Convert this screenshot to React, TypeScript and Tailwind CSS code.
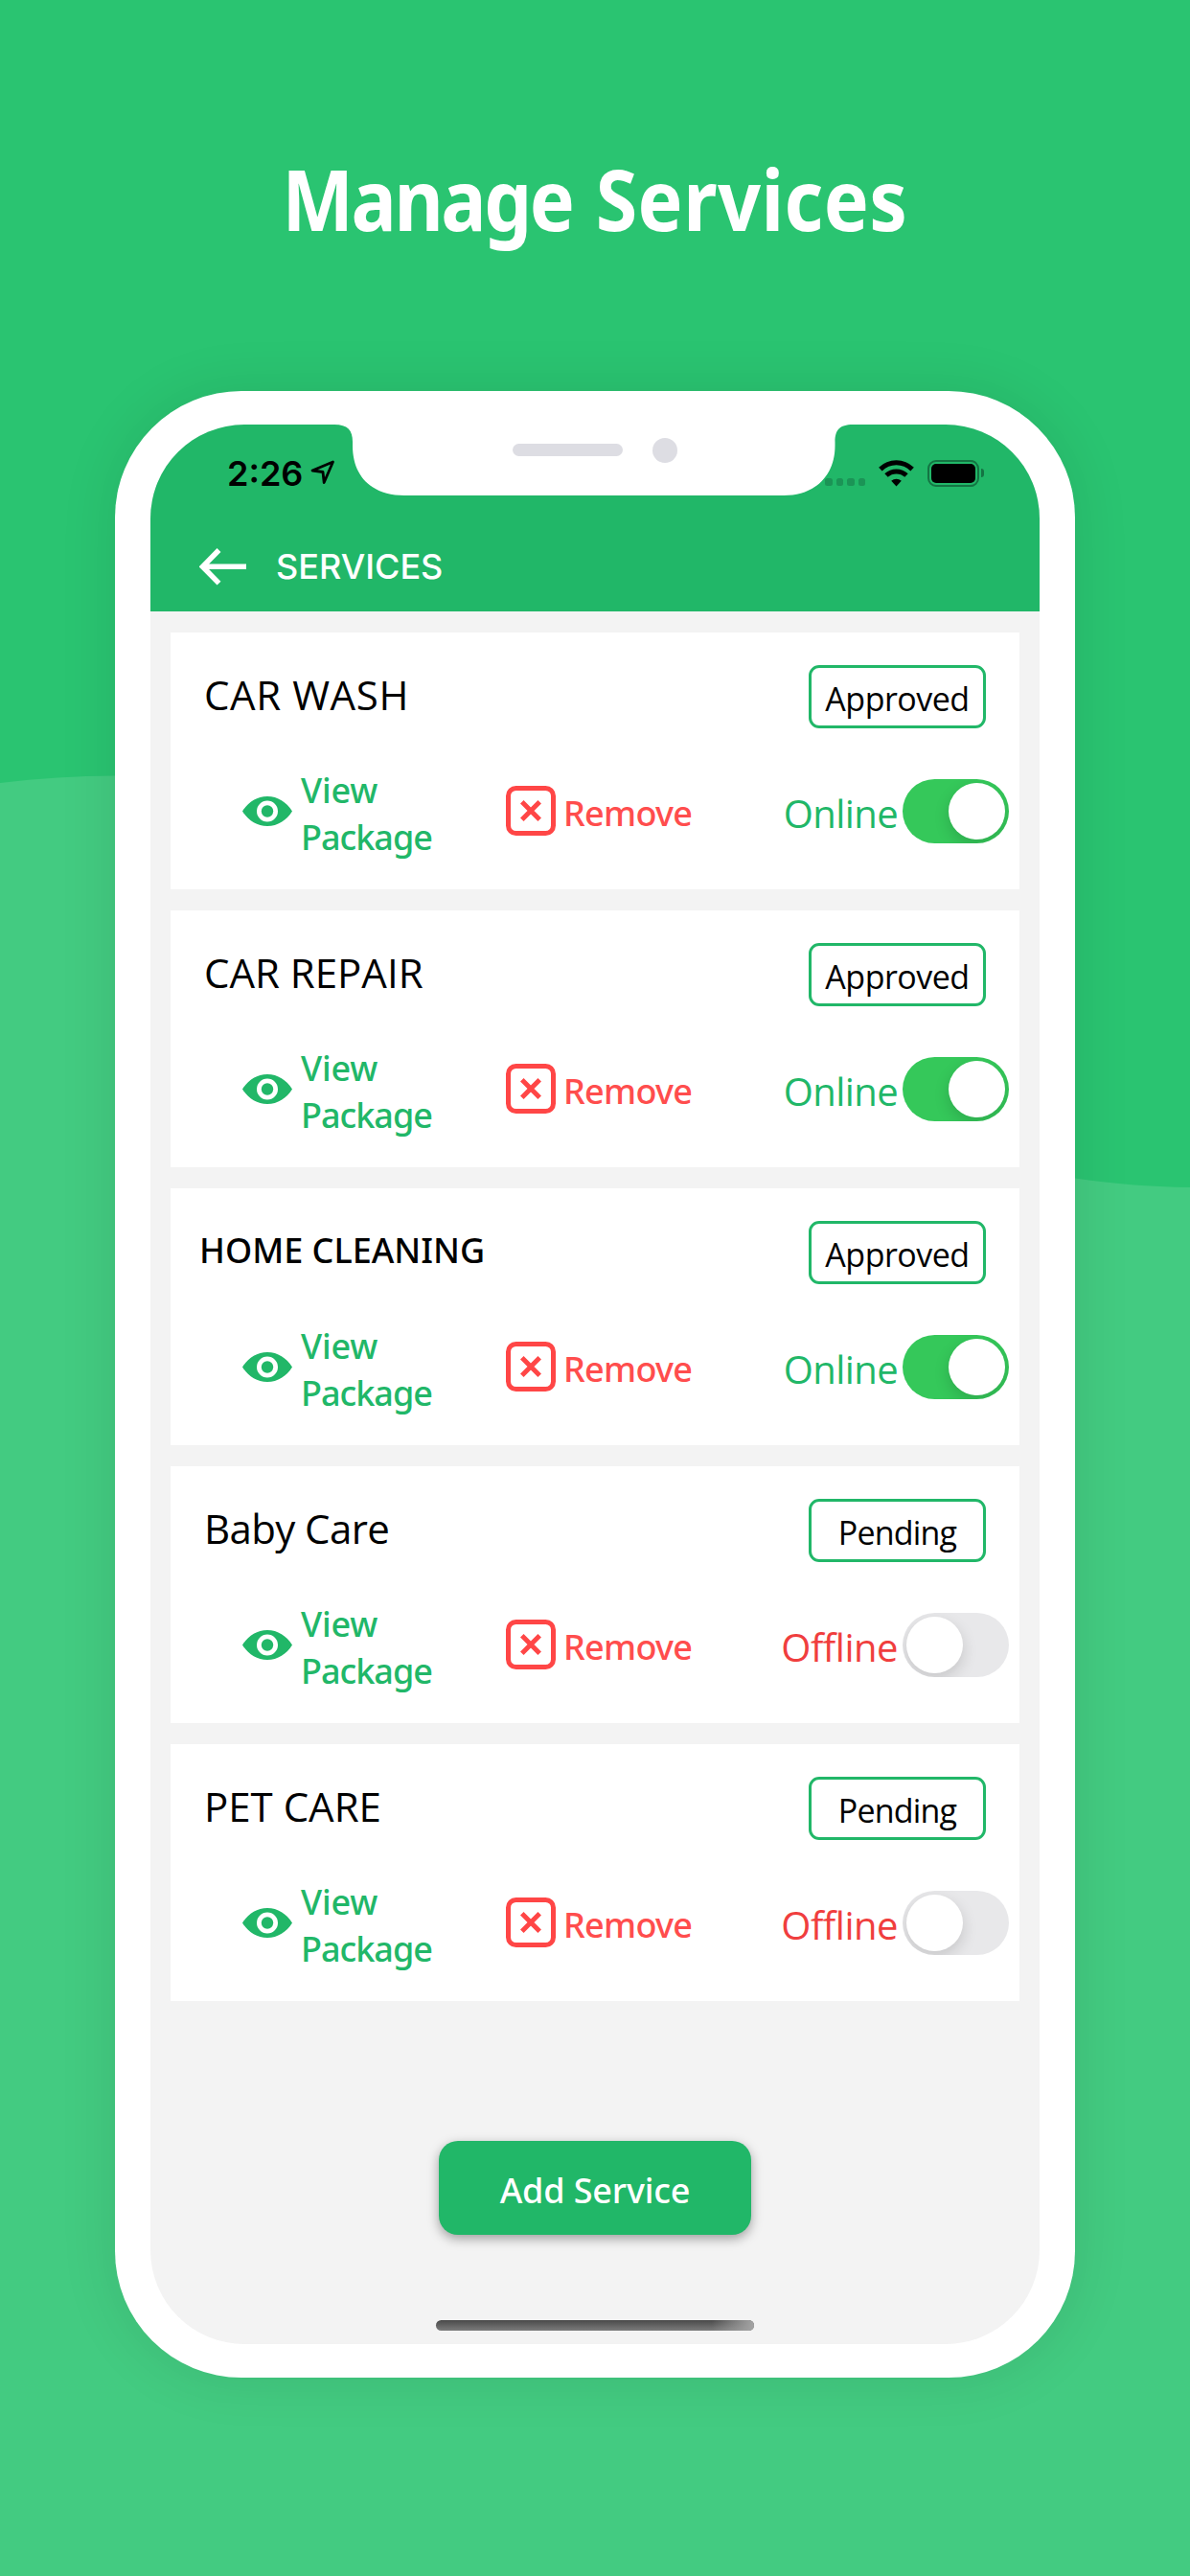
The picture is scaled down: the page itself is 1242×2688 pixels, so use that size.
import type { ReactNode } from "react";

type Service = {
  name: string;
  nameClass: string;
  status: "Approved" | "Pending";
  online: boolean;
};

const regularName = "ml-[35px] mt-[10px] text-[42px] font-['Open_Sans',sans-serif]";

const services: Service[] = [
  { name: "CAR WASH", nameClass: `${regularName} tracking-[0.6px]`, status: "Approved", online: true },
  { name: "CAR REPAIR", nameClass: `${regularName} tracking-normal`, status: "Approved", online: true },
  {
    name: "HOME CLEANING",
    nameClass: "ml-[30px] mt-[10px] text-[36px] font-medium",
    status: "Approved",
    online: true,
  },
  { name: "Baby Care", nameClass: `${regularName} tracking-[-0.6px]`, status: "Pending", online: false },
  { name: "PET CARE", nameClass: `${regularName} tracking-normal`, status: "Pending", online: false },
];

function Wave() {
  return (
    <svg className="absolute inset-0 h-full w-full" viewBox="0 0 1242 2688" fill="none" aria-hidden>
      <path
        d="M0 817C40 812 80 809.5 120 809.5C500 809.5 740 1180 1122 1229.5C1160 1235 1200 1238.500 1242 1239V2688H0Z"
        fill="#43cb81"
      />
    </svg>
  );
}

function Notch() {
  return (
    <div className="absolute left-0 top-[-2px] h-[76px] w-full">
      <svg className="absolute inset-0" width="928" height="76" viewBox="0 -2 928 76" aria-hidden>
        <path
          d="M192 -2V0C206 0 211 6 211 18V22C211 55 232 74 265 74H661C694 74 714.500 53 714.500 22V18C714.500 6 719 0 733 0V-2Z"
          fill="#fff"
        />
      </svg>
      <div className="relative flex h-[57px] items-center pl-[378px]">
        <span className="h-[13px] w-[115px] rounded-full bg-[#dddde3]" />
        <span className="ml-[31px] h-[26px] w-[26px] rounded-full bg-[#dddde3]" />
      </div>
    </div>
  );
}

function StatusBar() {
  return (
    <div className="flex h-[101px] items-center pl-[80px] pr-[58px] font-['Inter',sans-serif]">
      <span className="w-[79px] text-[36px] font-semibold leading-[40px] text-black">2:26</span>
      <svg className="ml-[8px] mt-[-2px]" width="26" height="26" viewBox="0 0 26 26" aria-hidden>
        <path
          d="M23.500 2L2 11L13 12.500L14.200 23.500Z"
          fill="none"
          stroke="#000"
          strokeWidth="2.800"
          strokeLinejoin="round"
        />
      </svg>
      <div className="ml-auto flex items-center">
        <div className="mt-[19px] flex gap-[4px]">
          {[0, 1, 2, 3].map((dot) => (
            <span key={dot} className="h-[8px] w-[7.500px] rounded-[2.500px] bg-[#1b9456]" />
          ))}
        </div>
        <svg className="ml-[14px]" width="37" height="28" viewBox="0 0 37 28" fill="none" aria-hidden>
          <path d="M1.900 9.600C11.200 0.500 25.800 0.500 35.100 9.600" stroke="#000" strokeWidth="5" />
          <path d="M8 16C14 10.500 23 10.500 29 16" stroke="#000" strokeWidth="5" />
          <path d="M13.200 21.800C16.300 18.900 20.700 18.900 23.800 21.800L18.500 27.500Z" fill="#000" />
        </svg>
        <div className="ml-[14px] h-[28px] w-[54px] rounded-[9px] border-2 border-[#147443] p-[2px]">
          <div className="h-full w-full rounded-[5px] bg-black" />
        </div>
        <span className="ml-[2px] h-[9px] w-[3px] rounded-r-full bg-[#147443]" />
      </div>
    </div>
  );
}

function NavBar() {
  return (
    <div className="flex h-[94px] items-center pl-[51px]">
      <svg width="49" height="39" viewBox="0 0 49 39" fill="none" stroke="#fff" strokeWidth="5.500" aria-hidden>
        <path d="M20.500 2L3.500 19.300L20.500 36.600M4 19.300H49" />
      </svg>
      <h2 className="ml-[31px] font-['Inter',sans-serif] text-[36px] font-medium leading-[44px] text-white">
        SERVICES
      </h2>
    </div>
  );
}

function EyeIcon() {
  return (
    <svg width="52" height="31" viewBox="0 0 52 31" aria-hidden>
      <path
        fillRule="evenodd"
        d="M0 15.500C6 6 15 0 26 0S46 6 52 15.500C46 25 37 31 26 31S6 25 0 15.500ZM26 4.500A11 11 0 1 0 26 26.500A11 11 0 1 0 26 4.500Z"
        fill="#21b768"
      />
      <circle cx="26" cy="15.500" r="6.200" fill="#21b768" />
    </svg>
  );
}

function RemoveIcon() {
  return (
    <svg width="52" height="52" viewBox="0 0 52 52" fill="none" stroke="#ff4646" aria-hidden>
      <rect x="2.500" y="2.500" width="47" height="47" rx="8" strokeWidth="5" />
      <path d="M16.800 16.800L35.200 35.200M35.200 16.800L16.800 35.200" strokeWidth="5" />
    </svg>
  );
}

function Action({ children, className }: { children: ReactNode; className: string }) {
  return <button className={`flex items-center text-left text-[36px] font-medium ${className}`}>{children}</button>;
}

function Toggle({ on }: { on: boolean }) {
  return (
    <span
      role="switch"
      aria-checked={on}
      className={`flex h-[67px] w-[111px] items-center overflow-hidden rounded-full px-[4px] ${
        on ? "justify-end bg-[#35c85a]" : "justify-start bg-[#e8e8ea]"
      }`}
    >
      <span className="h-[59px] w-[59px] rounded-full bg-white shadow-[0_6px_16px_rgba(0,0,0,0.15)]" />
    </span>
  );
}

function ServiceCard({ service }: { service: Service }) {
  const { name, nameClass, status, online } = service;
  return (
    <article className="h-[268px] bg-white pt-[34px]">
      <div className="flex h-[66px] items-start justify-between pr-[35px]">
        <h3 className={`leading-[42px] text-black ${nameClass}`}>{name}</h3>
        <span
          className={`h-[66px] w-[185px] rounded-[11px] border-[3px] border-[#21b768] pt-[4px] text-center font-['Open_Sans',sans-serif] text-[34px] leading-[57px] text-black ${
            status === "Approved" ? "tracking-[-0.5px]" : "tracking-[-0.8px]"
          }`}
        >
          {status}
        </span>
      </div>
      <div className="mt-[37px] flex h-[98px] items-center">
        <Action className="ml-[75px] w-[275px] gap-[9px] text-[#21b768]">
          <EyeIcon />
          <span className="pt-[6px] leading-[49px] tracking-[-1px]">
            <span className="tracking-[-0.2px]">View</span>
            <br />
            Package
          </span>
        </Action>
        <Action className="gap-[8px] text-[#ff4d4d]">
          <RemoveIcon />
          <span className="pt-[5px] leading-[49px] tracking-[-0.7px]">Remove</span>
        </Action>
        <div className="ml-auto mr-[11px] flex items-center gap-[5px]">
          <span
            className={`pt-[6px] font-['Open_Sans',sans-serif] text-[40px] leading-[50px] ${
              online ? "tracking-[-0.6px] text-[#21b768]" : "tracking-[-0.5px] text-[#f03e3e]"
            }`}
          >
            {online ? "Online" : "Offline"}
          </span>
          <Toggle on={online} />
        </div>
      </div>
    </article>
  );
}

export default function App() {
  return (
    <main className="relative flex h-[2688px] w-[1242px] flex-col items-center overflow-hidden bg-[#2ac471] pt-[147px] font-['Noto_Sans',sans-serif]">
      <Wave />
      <h1 className="relative h-[120px] scale-x-[0.907] whitespace-nowrap text-[87px] font-bold leading-[120px] text-white [word-spacing:4px]">
        <span className="tracking-[-2.600px]">Manage</span> <span className="tracking-[0.500px]">Services</span>
      </h1>
      <section className="relative mt-[141px] h-[2073px] w-[1002px] rounded-[132px] bg-white px-[37px] py-[35px] shadow-[0_0_60px_rgba(0,0,0,0.1)]">
        <div className="relative h-full w-full">
          <div className="flex h-full w-full flex-col overflow-hidden rounded-[98px] bg-[#f3f3f3]">
            <header className="h-[195px] bg-[#21b768]">
              <StatusBar />
              <NavBar />
            </header>
            <div className="flex flex-col gap-[22px] px-[21px] pt-[22px]">
              {services.map((service) => (
                <ServiceCard key={service.name} service={service} />
              ))}
            </div>
            <button className="mx-auto mt-[146px] h-[98px] w-[326px] rounded-[20px] bg-[#21b768] pt-[5px] text-[36px] font-medium leading-[93px] tracking-[-0.15px] text-white shadow-[0_4px_12px_rgba(0,0,0,0.35)]">
              Add Service
            </button>
            <div className="mx-auto mt-[89px] h-[11px] w-[332px] overflow-hidden rounded-full bg-linear-to-b from-[#4a4a4a] to-[#7c7c7c]">
              <div className="ml-auto h-full w-[44px] bg-linear-to-r from-transparent to-[#a4a4a4]" />
            </div>
          </div>
          <Notch />
        </div>
      </section>
    </main>
  );
}
